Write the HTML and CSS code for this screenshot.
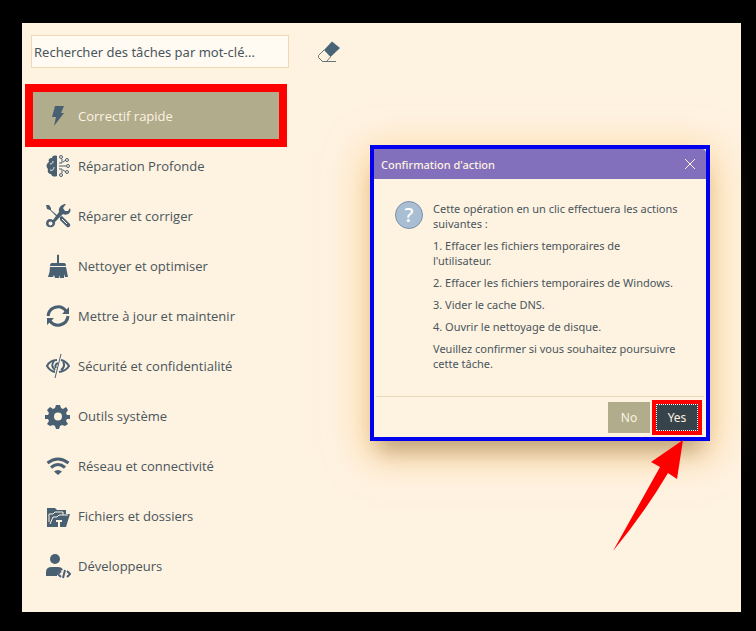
FILE: index.html
```html
<!DOCTYPE html>
<html lang="fr">
<head>
  <meta charset="UTF-8" />
  <meta name="viewport" content="width=device-width, initial-scale=1" />
  <title>Correctif rapide</title>
  <link rel="stylesheet" href="styles.css">
</head>
<body>

  <div class="app">
    <header class="toolbar">
      <input type="text" class="search" aria-label="Rechercher des tâches" placeholder="Rechercher des tâches par mot-clé..." />
      <button type="button" class="clear-btn" aria-label="Effacer la recherche">
        <svg width="24" height="24" viewBox="0 0 24 24">
          <path d="M15 1.500 23 8 13.500 17 7 10z" fill="#496377" />
          <path d="M7 10 1.500 15.500v2l4 4h4l4-4.500M5 21.500h14" fill="none" stroke="#6b7377" />
        </svg>
      </button>
    </header>

    <div class="content">
      <nav class="menu">
        <a href="#" class="menu-item active">
          <svg class="icon" viewBox="0 0 26 26"><path d="M10 3h9l-3 7h3L9 23l2-9H7z" /></svg>
          <span>Correctif rapide</span>
        </a>
        <a href="#" class="menu-item">
          <svg class="icon" viewBox="0 0 26 26">
            <path d="M12 3c-3-1-5 0-5 2-3 0-4 2-3 4-3 2-3 5-1 7-1 3 1 5 3 5 1 3 4 3 6 2z" />
            <path d="M5 11c2 0 3-1 3-3M5 17c3 1 4-1 4-3" class="cut" />
            <path d="M14 10h3V6M14 13h7M14 16h3v4M18 9l3-2M18 17l3 2" class="line" />
            <circle cx="16" cy="4" r="1.500" class="line" /><circle cx="22" cy="7" r="1.500" class="line" />
            <circle cx="23" cy="13" r="1.500" class="line" /><circle cx="22" cy="19" r="1.500" class="line" />
            <circle cx="16" cy="22" r="1.500" class="line" />
          </svg>
          <span>Réparation Profonde</span>
        </a>
        <a href="#" class="menu-item">
          <svg class="icon" viewBox="0 0 26 26">
            <path d="M1 2l3 0 2 3v2l7 6-1 1-7-7-3-1zM15 14l2-1 8 8c1 2-1 4-3 3l-7-7z" />
            <path d="M21 1l-3 4 2 3 3 0 2-3c2 5-3 8-7 6l-8 8c1 6-8 7-9 2 0-5 4-6 7-4l6-8c-1-5 3-8 7-8z" />
            <circle cx="5.500" cy="20.500" r="2" class="hole" />
            <path d="M17 16l5 5" class="cut" />
          </svg>
          <span>Réparer et corriger</span>
        </a>
        <a href="#" class="menu-item">
          <svg class="icon" viewBox="0 0 26 26">
            <path d="M12 2q1-1 2 0v8h5q2 0 2 3H5q0-3 2-3h5zM5 14h16l2 10h-3l-1-3v4h-4l-1-3v3h-4l-1-3-1 2H3q2-5 2-10z" />
          </svg>
          <span>Nettoyer et optimiser</span>
        </a>
        <a href="#" class="menu-item">
          <svg class="icon" viewBox="0 0 26 26">
            <path d="M3 13a10 10 0 0 1 18-5M23 13a10 10 0 0 1-18 5" class="thick" />
            <path d="M24 4v7h-7zM2 22v-7h7z" />
          </svg>
          <span>Mettre à jour et maintenir</span>
        </a>
        <a href="#" class="menu-item">
          <svg class="icon" viewBox="0 0 26 26">
            <path d="M12 7Q5 7 2 13q3 5 8 6M16 7q5 1 8 6-3 5-10 6M9 8q-4 5 1 9M18 9q3 4-2 8M13 10q-4 2-2 5" class="eye" />
            <path d="M16 1 10 25" class="slash" />
          </svg>
          <span>Sécurité et confidentialité</span>
        </a>
        <a href="#" class="menu-item">
          <svg class="icon" viewBox="0 0 26 26">
            <path fill-rule="evenodd" d="M11 2h4l1 3 2 1 3-2 2 3-2 3 1 2 3 0v4l-3 0-1 2 2 3-3 2-3-1-2 1-1 3h-3l-1-3-2-1-3 1-3-2 2-3-1-2-3 0v-4l3 0 1-2-2-3 3-3 3 2 2-1zM13 9.500a4 4 0 1 0 0 8 4 4 0 0 0 0-8z" />
          </svg>
          <span>Outils système</span>
        </a>
        <a href="#" class="menu-item">
          <svg class="icon" viewBox="0 0 26 26">
            <path d="M2.500 10q10.500-8 21 0M6 14.500q7-6 14 0" class="wave" />
            <path d="M9 18.500q4-3 8 0L13 22z" />
          </svg>
          <span>Réseau et connectivité</span>
        </a>
        <a href="#" class="menu-item">
          <svg class="icon" viewBox="0 0 26 26">
            <path d="M2 5h8l2 2h9v4h4l-4 13H2z" />
            <path d="M4 19V11h4l2-2h8v3M5 21l3-7h4l2-2h9" class="cut" />
            <path d="M11 17h6v2h-2v5h-2v-5h-2z" class="hole" />
          </svg>
          <span>Fichiers et dossiers</span>
        </a>
        <a href="#" class="menu-item">
          <svg class="icon" viewBox="0 0 26 26">
            <circle cx="10" cy="6" r="5" />
            <path d="M1 23v-4q0-5 6-5h6q4 0 5 3-6 1-6 6z" />
            <path d="M16 18l-3 3 3 3M22 18l3 3-3 3M20 17l-2 8" class="code" />
          </svg>
          <span>Développeurs</span>
        </a>
      </nav>

      <section class="dialog" role="dialog" aria-labelledby="dialogTitle">
        <div class="dialog-header">
          <h2 id="dialogTitle">Confirmation d'action</h2>
          <button type="button" class="close-btn" aria-label="Fermer">
            <svg width="12" height="12" viewBox="0 0 12 12"><path d="M1 1l10 10M11 1L1 11" /></svg>
          </button>
        </div>
        <div class="dialog-body">
          <div class="question">?</div>
          <div class="message">
            <p>Cette opération en un clic effectuera les actions<br>suivantes :</p>
            <p>1. Effacer les fichiers temporaires de<br>l'utilisateur.</p>
            <p>2. Effacer les fichiers temporaires de Windows.</p>
            <p>3. Vider le cache DNS.</p>
            <p>4. Ouvrir le nettoyage de disque.</p>
            <p>Veuillez confirmer si vous souhaitez poursuivre<br>cette tâche.</p>
          </div>
        </div>
        <div class="dialog-footer">
          <button type="button" class="no-btn">No</button>
          <div class="highlight"><button type="button" class="yes-btn">Yes</button></div>
        </div>
        <svg class="arrow" width="72" height="112" viewBox="0 0 72 112">
          <path d="M71 0 65 39 56 33Q33 72 1 111L48 27 39 22z" fill="#f00" />
        </svg>
      </section>
    </div>
  </div>

</body>
</html>
```

FILE: styles.css
```css
* {
  box-sizing: border-box;
}
body {
  margin: 0;
  padding: 23px 15px 19px 22px;
  min-height: 100vh;
  display: flex;
  background: #000;
  color: #49565c;
  font-family: 'Noto Sans', 'Open Sans', sans-serif;
}
button {
  border: none;
  padding: 0;
  font-family: inherit;
  cursor: pointer;
}
.app {
  flex: 1;
  padding: 12px 31px 20px 9px;
  background: #fef2e1;
}
.toolbar {
  display: flex;
  align-items: center;
  gap: 28px;
}
.search {
  width: 258px;
  height: 33px;
  padding: 0 2px;
  border: 1px solid #f0d9b2;
  background: #fffaf2;
  font-family: inherit;
  font-size: 13px;
  color: #49565c;
  outline: none;
}
.search::placeholder {
  color: #49565c;
  opacity: 1;
}
.clear-btn {
  display: flex;
  background: none;
}
.content {
  display: flex;
  justify-content: space-between;
  align-items: flex-start;
}
.menu {
  width: 246px;
  margin: 24px 0 0 2px;
  display: flex;
  flex-direction: column;
  gap: 3px;
}
.menu-item {
  display: flex;
  align-items: center;
  gap: 7px;
  height: 47px;
  padding-left: 12px;
  color: #49565c;
  font-family: 'Open Sans', 'Noto Sans', sans-serif;
  font-size: 13px;
  font-weight: 500;
  text-decoration: none;
}
.menu-item.active {
  background: #b1ac8c;
  color: #fef2e1;
  box-shadow: 0 0 0 8px #f00;
}

/* menu icons */
.icon {
  width: 26px;
  height: 26px;
  fill: #496073;
}
.icon .line, .icon .thick, .icon .eye, .icon .slash, .icon .wave, .icon .code {
  fill: none;
  stroke: #496073;
}
.icon .thick, .icon .wave {
  stroke-width: 3;
}
.icon .eye, .icon .code {
  stroke-width: 2;
}
.icon .cut {
  fill: none;
  stroke: #fef2e1;
}
.icon .hole {
  fill: #fef2e1;
}

.dialog {
  position: relative;
  width: 340px;
  margin-top: 77px;
  border: 4px solid #0000ee;
  background: #fef2e1;
  box-shadow: 0 18px 20px -8px rgba(80, 70, 60, 0.35), 0 10px 36px 4px rgba(255, 190, 90, 0.6);
}
.dialog-header {
  display: flex;
  justify-content: space-between;
  align-items: center;
  height: 30px;
  padding: 0 10px 0 7px;
  border-top-right-radius: 4px;
  background: #8370bc;
  color: #fef2e1;
}
.dialog-header h2 {
  margin: 0;
  font-size: 11px;
  font-weight: 500;
}
.close-btn {
  display: flex;
  background: none;
}
.close-btn path {
  stroke: #fef2e1;
}
.dialog-body {
  display: flex;
  gap: 10px;
  padding: 22px 12px 25px 21px;
}
.question {
  flex: none;
  width: 28px;
  height: 28px;
  border: 1px solid #7b91aa;
  border-radius: 50%;
  background: #a9bed3;
  color: #fff;
  font-size: 20px;
  font-weight: 500;
  line-height: 26px;
  text-align: center;
}
.message {
  font-size: 11px;
  line-height: 15px;
  white-space: nowrap;
}
.message p {
  margin: 0 0 7px;
}
.message p:last-child {
  margin: 0;
}
.dialog-footer {
  display: flex;
  justify-content: flex-end;
  align-items: center;
  gap: 2px;
  margin: 0 2px;
  padding: 3px 2px 2px;
  border-top: 1px solid #ead9b8;
}
.no-btn, .yes-btn {
  font-size: 12px;
  color: #fef2e1;
}
.no-btn {
  width: 42px;
  height: 31px;
  background: #b1ac8c;
}
.highlight {
  display: flex;
  border: 4px solid #f00;
}
.yes-btn {
  width: 42px;
  height: 27px;
  background: #37434a;
  outline: 1px dotted #fff;
  outline-offset: -1px;
}
.arrow {
  position: absolute;
  top: 291px;
  right: 22px;
}
```
